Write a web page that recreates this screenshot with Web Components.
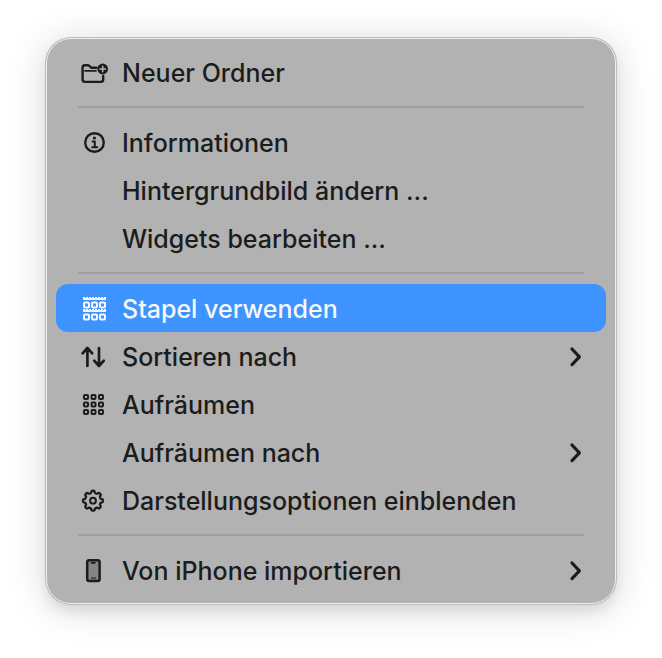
<!DOCTYPE html>
<html lang="de">
<head>
<meta charset="utf-8">
<meta name="viewport" content="width=device-width, initial-scale=1">
<title>Schreibtisch</title>
<style>
  body {
    margin: 0;
    padding: 38px 46px 54px;
    background: #fff;
    color: #1c1c1c;
    font-family: Inter, "Liberation Sans", sans-serif;
  }
</style>
</head>
<body>
<context-menu>
  <menu-item icon="folder">Neuer Ordner</menu-item>
  <menu-separator></menu-separator>
  <menu-item icon="info">Informationen</menu-item>
  <menu-item>Hintergrundbild ändern ...</menu-item>
  <menu-item>Widgets bearbeiten ...</menu-item>
  <menu-separator></menu-separator>
  <menu-item icon="stacks" selected>Stapel verwenden</menu-item>
  <menu-item icon="sort" submenu>Sortieren nach</menu-item>
  <menu-item icon="grid">Aufräumen</menu-item>
  <menu-item submenu>Aufräumen nach</menu-item>
  <menu-item icon="gear">Darstellungsoptionen einblenden</menu-item>
  <menu-separator></menu-separator>
  <menu-item icon="phone" submenu>Von iPhone importieren</menu-item>
</context-menu>

<script>
// Rounded cells shared by the grid and stacks icons
function cells(xs, ys, size) {
  return ys.map((y) => xs.map((x) =>
    `<rect x="${x}" y="${y}" width="${size}" height="${size}" rx="1" stroke-width="2"/>`
  ).join("")).join("");
}

// Outline of a cog with eight soft teeth
function gearPath(cx, cy) {
  const points = [];
  for (let i = 0; i < 144; i++) {
    const a = (i / 144) * Math.PI * 2;
    const r = 8.9 + 1.1 * Math.tanh(2 * Math.cos(8 * a));
    points.push((cx + r * Math.sin(a)).toFixed(2) + " " + (cy - r * Math.cos(a)).toFixed(2));
  }
  return "M" + points.join("L") + "Z";
}

const ICONS = {
  folder:
    '<path d="M18.4 11.7H13.2L11.3 9.9Q10.6 9.2 9.6 9.2H6.7Q4.6 9.2 4.6 11.3V23.6Q4.6 25.9 6.9 25.9H22.9Q25.2 25.9 25.2 23.6V20"/>' +
    '<path d="M7 14.8H18" stroke-width="1.7"/>' +
    '<circle cx="24.7" cy="13" r="5.4" fill="currentColor" stroke="none"/>' +
    '<path d="M24.7 10.2V15.8M21.9 13H27.5" stroke="#b2b2b2" stroke-width="1.5"/>',
  info:
    '<circle cx="16.5" cy="16.5" r="9.3"/>' +
    '<circle cx="16.4" cy="12" r="1.6" fill="currentColor" stroke="none"/>' +
    '<path d="M14.6 15.4H16.8V21M14.2 21.2H19.2" stroke-width="2"/>',
  stacks:
    '<path d="M5 5.5H28M5 17.5H28" stroke-width="1" stroke-dasharray="2 1" stroke-linecap="butt"/>' +
    '<path d="M5 7H28M5 19H28" stroke-width="1.8" stroke-linecap="butt"/>' +
    cells([6, 14, 22], [10.5, 22.5], 5),
  sort:
    '<path d="M9.4 26V8M4.6 13.3L9.4 8L14.2 13.3M21 8V26M16.2 20.7L21 26L25.8 20.7" stroke-width="2.7"/>',
  grid: cells([6, 13.5, 21], [7, 14.5, 22], 4),
  gear:
    `<path d="${gearPath(15, 16.7)}" stroke-width="2.3"/>` +
    '<circle cx="15" cy="16.7" r="2.9" stroke-width="2"/>',
  phone:
    '<rect x="9.2" y="6.2" width="12.4" height="20.8" rx="2" fill="#858585" stroke-width="2.5"/>' +
    '<path d="M13.6 8.8H16.9" stroke-width="1.7"/>' +
    '<path d="M13 24.2H18" stroke="#4d4d4d" stroke-width="2.2" stroke-linecap="butt"/>',
};

const CHEVRON = '<svg class="chevron" viewBox="0 0 16 24" aria-hidden="true"><path d="M4 5L11.4 12.8L4 20.6" stroke-width="3.2"/></svg>';

class ContextMenu extends HTMLElement {
  constructor() {
    super();
    this.attachShadow({ mode: "open" });
    this.shadowRoot.innerHTML = `
      <style>
        :host {
          display: flex;
          flex-direction: column;
          box-sizing: border-box;
          padding: 9px;
          border: 1px solid #e9edf5;
          border-radius: 25px;
          background: #b2b2b2;
          box-shadow:
            0 0 0 1px #bdbdbd,
            0 8px 12px rgba(0, 0, 0, 0.08),
            0 4px 36px 4px rgba(0, 0, 0, 0.13);
        }
      </style>
      <slot></slot>`;
  }

  connectedCallback() {
    this.setAttribute("role", "menu");
  }
}

class MenuSeparator extends HTMLElement {
  constructor() {
    super();
    this.attachShadow({ mode: "open" });
    this.shadowRoot.innerHTML = `
      <style>
        :host {
          display: block;
          height: 2px;
          margin: 10px 22px;
          background: #a0a0a0;
        }
      </style>`;
  }

  connectedCallback() {
    this.setAttribute("role", "separator");
  }
}

class MenuItem extends HTMLElement {
  constructor() {
    super();
    this.attachShadow({ mode: "open" });
  }

  connectedCallback() {
    this.setAttribute("role", "none");
    this._render();
  }

  _render() {
    const icon = ICONS[this.getAttribute("icon")] || "";
    const submenu = this.hasAttribute("submenu");

    this.shadowRoot.innerHTML = `
      <style>
        :host {
          display: block;
        }
        button {
          display: flex;
          align-items: center;
          gap: 12px;
          box-sizing: border-box;
          width: 100%;
          height: 48px;
          margin: 0;
          padding: 0 22px;
          border: 0;
          border-radius: 12px;
          background: none;
          color: inherit;
          font: 500 25px/32px Inter, "Liberation Sans", sans-serif;
          text-align: left;
          white-space: nowrap;
        }
        :host([selected]) button {
          background: #3e93ff;
          color: #f7f7f7;
        }
        svg {
          flex: none;
          fill: none;
          stroke: currentColor;
          stroke-linecap: round;
          stroke-linejoin: round;
        }
        .icon {
          width: 32px;
          height: 32px;
        }
        .chevron {
          width: 16px;
          height: 24px;
        }
        .label {
          flex: 1;
          padding-top: 2px;
        }
      </style>
      <button type="button" role="menuitem"${submenu ? ' aria-haspopup="menu"' : ""}>
        <svg class="icon" viewBox="0 0 32 32" stroke-width="2.4" aria-hidden="true">${icon}</svg>
        <span class="label"><slot></slot></span>
        ${submenu ? CHEVRON : ""}
      </button>`;
  }
}

customElements.define("context-menu", ContextMenu);
customElements.define("menu-separator", MenuSeparator);
customElements.define("menu-item", MenuItem);
</script>
</body>
</html>
